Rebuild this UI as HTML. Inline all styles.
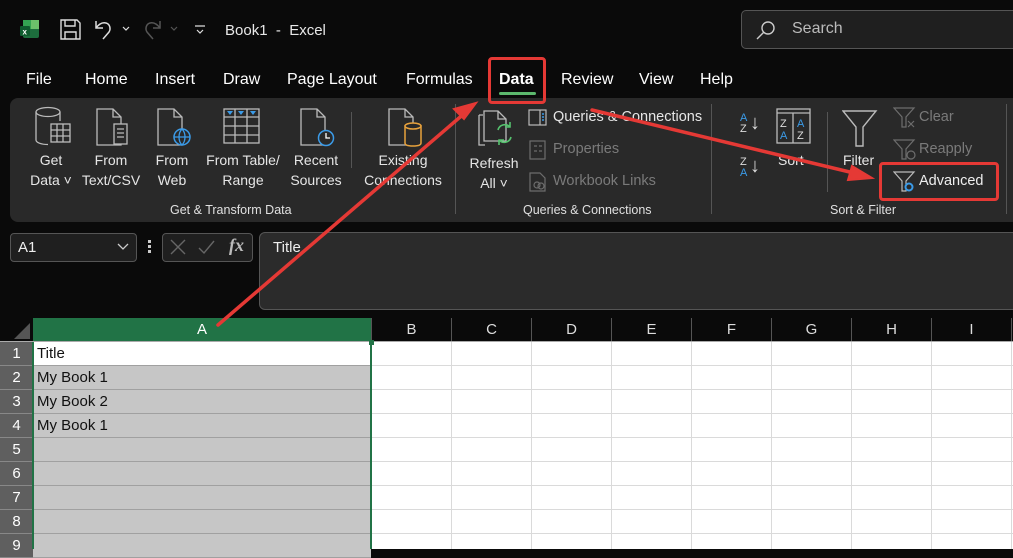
<!DOCTYPE html>
<html><head><meta charset="utf-8">
<style>
*{margin:0;padding:0;box-sizing:border-box}
body{width:1013px;height:549px;overflow:hidden;background:#0a0a0a;font-family:"Liberation Sans",sans-serif;color:#fff;position:relative}
.a{position:absolute}
.t{position:absolute;white-space:nowrap}
.menu{font-size:16px;top:71px;color:#fff}
.rb{font-size:14px;color:#e6e6e6;text-align:center;line-height:20px}
.dim{color:#7a7a7a}
.grp{font-size:12.5px;color:#e0e0e0}
.ch{position:absolute;top:318px;height:24px;border-left:1px solid #555;color:#ddd;font-size:15px;text-align:center;line-height:24px}
.rh{position:absolute;left:0;width:33px;height:24px;background:#5f5f5f;color:#fff;font-size:15px;text-align:center;line-height:24px;border-bottom:1px solid #888}
.cell{position:absolute;left:33px;width:338px;height:24px;background:#c6c6c6;border-bottom:1px solid #a0a0a0;color:#111;font-size:15px;line-height:24px;padding-left:4px}
</style></head><body>
<!-- title bar -->
<svg class="a" style="left:20px;top:19px" width="20" height="20" viewBox="0 0 20 20"><rect x="3" y="1" width="16" height="18" rx="2" fill="#1d6e3d"/><rect x="11" y="1" width="8" height="9" fill="#6cc06b"/><rect x="3" y="1" width="8" height="9" fill="#33a452"/><rect x="0" y="7" width="10" height="10" rx="1" fill="#0f5c2e"/><text x="2.5" y="15.5" font-size="8" font-weight="bold" fill="#fff" font-family="Liberation Sans">x</text></svg>
<svg class="a" style="left:60px;top:19px" width="21" height="21" viewBox="0 0 21 21" fill="none" stroke="#ddd" stroke-width="1.4"><path d="M1 1h16l3 3v16H1z"/><path d="M5 1v6h10V1M5 20v-7h11v7"/></svg>
<svg class="a" style="left:94px;top:19px" width="40" height="22" viewBox="0 0 40 22" fill="none" stroke="#ddd" stroke-width="1.5"><path d="M2 2v7h7M2 9c3-4 6-6 10-5 4 1 5 6 3 9l-6 7"/><path d="M29 8l3 3 3-3" stroke-width="1.2"/></svg>
<svg class="a" style="left:142px;top:19px" width="40" height="22" viewBox="0 0 40 22" fill="none" stroke="#555" stroke-width="1.5"><path d="M18 2v7h-7M18 9c-3-4-6-6-10-5-4 1-5 6-3 9l6 7"/><path d="M29 8l3 3 3-3" stroke-width="1.2"/></svg>
<svg class="a" style="left:194px;top:24px" width="12" height="12" viewBox="0 0 12 12" fill="none" stroke="#ddd" stroke-width="1.2"><path d="M1 2h10M3 6l3 3 3-3"/></svg>
<div class="t" style="left:225px;top:22px;font-size:15px;color:#e8e8e8">Book1&nbsp; -&nbsp; Excel</div>
<div class="a" style="left:741px;top:10px;width:290px;height:39px;border:1px solid #555;border-radius:5px;background:#1f1f1f"></div>
<svg class="a" style="left:756px;top:20px" width="20" height="20" viewBox="0 0 20 20" fill="none" stroke="#ccc" stroke-width="1.4"><circle cx="12" cy="8" r="6"/><path d="M7.5 12.5L1 19"/></svg>
<div class="t" style="left:792px;top:20px;font-size:16px;color:#bbb">Search</div>
<!-- menu -->
<div class="t menu" style="left:26px">File</div>
<div class="t menu" style="left:85px">Home</div>
<div class="t menu" style="left:155px">Insert</div>
<div class="t menu" style="left:223px">Draw</div>
<div class="t menu" style="left:287px">Page Layout</div>
<div class="t menu" style="left:406px">Formulas</div>
<div class="t menu" style="left:499px;font-weight:bold">Data</div>
<div class="a" style="left:499px;top:92px;width:37px;height:3px;border-radius:2px;background:#5cb86d"></div>
<div class="t menu" style="left:561px">Review</div>
<div class="t menu" style="left:639px">View</div>
<div class="t menu" style="left:700px">Help</div>
<!-- ribbon -->
<div class="a" style="left:10px;top:98px;width:1010px;height:124px;background:#292929;border-radius:8px"></div>
<div class="a" style="left:351px;top:112px;width:1px;height:56px;background:#555"></div>
<div class="a" style="left:455px;top:104px;width:1px;height:110px;background:#555"></div>
<div class="a" style="left:711px;top:104px;width:1px;height:110px;background:#555"></div>
<div class="a" style="left:827px;top:112px;width:1px;height:80px;background:#555"></div>
<div class="a" style="left:1006px;top:104px;width:1px;height:110px;background:#555"></div>
<!-- icons -->
<svg class="a" style="left:34px;top:106px" width="40" height="42" viewBox="0 0 40 42" fill="none" stroke="#bbb" stroke-width="1.3"><ellipse cx="14" cy="6" rx="12" ry="4.5"/><path d="M2 6v28c0 2.5 5 4.5 12 4.5M26 6v9"/><rect x="17" y="18" width="19" height="18" fill="#292929"/><path d="M17 24h19M17 30h19M23 18v18M29 18v18"/></svg>
<svg class="a" style="left:96px;top:108px" width="36" height="40" viewBox="0 0 36 40" fill="none" stroke="#bbb" stroke-width="1.3"><path d="M1 1h16l8 8v28H1z M17 1v8h8"/><rect x="18" y="16" width="13" height="20" fill="#292929"/><path d="M21 21h7M21 25h7M21 29h7"/></svg>
<svg class="a" style="left:157px;top:108px" width="36" height="40" viewBox="0 0 36 40" fill="none" stroke="#bbb" stroke-width="1.3"><path d="M1 1h16l8 8v28H1z M17 1v8h8"/><circle cx="25" cy="29" r="8" fill="#292929" stroke="#3b9be8" stroke-width="1.5"/><path d="M17 29h16M25 21c-4 4-4 12 0 16M25 21c4 4 4 12 0 16" stroke="#3b9be8"/></svg>
<svg class="a" style="left:223px;top:108px" width="38" height="38" viewBox="0 0 38 38" fill="none" stroke="#bbb" stroke-width="1.3"><rect x="1" y="1" width="35" height="34"/><path d="M1 9h35M1 18h35M1 27h35M12 1v34M24 1v34"/><path d="M4 3h6l-3 4zM15 3h6l-3 4zM27 3h6l-3 4z" fill="#3b9be8" stroke="none"/></svg>
<svg class="a" style="left:300px;top:108px" width="38" height="40" viewBox="0 0 38 40" fill="none" stroke="#bbb" stroke-width="1.3"><path d="M1 1h16l8 8v28H1z M17 1v8h8"/><circle cx="26" cy="30" r="7.5" fill="#292929" stroke="#3b9be8" stroke-width="1.5"/><path d="M26 25v5h4" stroke="#fff"/></svg>
<svg class="a" style="left:388px;top:108px" width="36" height="40" viewBox="0 0 36 40" fill="none" stroke="#bbb" stroke-width="1.3"><path d="M1 1h16l8 8v28H1z M17 1v8h8"/><path d="M17 18v17c0 2 3 3 8 3s8-1 8-3V18z" fill="#292929" stroke="#e8a23c" stroke-width="1.5"/><ellipse cx="25" cy="18" rx="8" ry="3" fill="#292929" stroke="#e8a23c" stroke-width="1.5"/></svg>
<div class="t rb" style="left:28px;top:150px;width:46px">Get<br>Data ˅</div>
<div class="t rb" style="left:80px;top:150px;width:62px">From<br>Text/CSV</div>
<div class="t rb" style="left:148px;top:150px;width:48px">From<br>Web</div>
<div class="t rb" style="left:200px;top:150px;width:86px">From Table/<br>Range</div>
<div class="t rb" style="left:288px;top:150px;width:56px">Recent<br>Sources</div>
<div class="t rb" style="left:358px;top:150px;width:90px">Existing<br>Connections</div>
<div class="t grp" style="left:170px;top:203px">Get &amp; Transform Data</div>
<!-- queries -->
<svg class="a" style="left:478px;top:110px" width="40" height="44" viewBox="0 0 40 44" fill="none" stroke="#bbb" stroke-width="1.3"><path d="M1 5h4M1 5v30h6"/><path d="M6 1h14l8 8v22H6z M20 1v8h8"/><path d="M20 20a7 7 0 0 1 12-3M33 27a7 7 0 0 1-12 3" stroke="#55c26e" stroke-width="1.6"/><path d="M32 12v5h-5M21 35v-5h5" stroke="#55c26e" stroke-width="1.6"/></svg>
<div class="t rb" style="left:466px;top:153px;width:56px">Refresh<br>All ˅</div>
<svg class="a" style="left:528px;top:109px" width="20" height="18" viewBox="0 0 20 18" fill="none" stroke="#bbb" stroke-width="1.2"><rect x="1" y="1" width="17" height="15"/><path d="M12 1v15"/><path d="M14 5h2M14 8h2M14 11h2" stroke="#3b9be8" stroke-width="1.5"/></svg>
<div class="t" style="left:553px;top:109px;font-size:14.5px;color:#e6e6e6">Queries &amp; Connections</div>
<svg class="a" style="left:529px;top:140px" width="18" height="20" viewBox="0 0 18 20" fill="none" stroke="#6d6d6d" stroke-width="1.2"><rect x="1" y="1" width="15" height="18"/><path d="M5 6h3M10 6h3M5 11h3M10 11h3"/></svg>
<div class="t dim" style="left:553px;top:141px;font-size:14.5px">Properties</div>
<svg class="a" style="left:529px;top:172px" width="18" height="20" viewBox="0 0 18 20" fill="none" stroke="#6d6d6d" stroke-width="1.2"><path d="M1 1h10l5 5v13H1z"/><circle cx="8" cy="13" r="3"/><circle cx="12" cy="14" r="3"/></svg>
<div class="t dim" style="left:553px;top:173px;font-size:14.5px">Workbook Links</div>
<div class="t grp" style="left:523px;top:203px">Queries &amp; Connections</div>
<!-- sort -->
<div class="t" style="left:740px;top:113px;font-size:11px;line-height:11px;color:#3b9be8">A<br><span style="color:#ddd">Z</span></div>
<div class="t" style="left:750px;top:112px;font-size:20px;color:#ddd">↓</div>
<div class="t" style="left:740px;top:157px;font-size:11px;line-height:11px;color:#ddd">Z<br><span style="color:#3b9be8">A</span></div>
<div class="t" style="left:750px;top:155px;font-size:20px;color:#ddd">↓</div>
<svg class="a" style="left:776px;top:108px" width="36" height="38" viewBox="0 0 36 38" fill="none" stroke="#bbb" stroke-width="1.3"><rect x="1" y="1" width="33" height="34"/><path d="M1 5h33M17 5v30"/><text x="4" y="19" font-size="11" fill="#ddd" stroke="none" font-family="Liberation Sans">Z</text><text x="4" y="31" font-size="11" fill="#3b9be8" stroke="none" font-family="Liberation Sans">A</text><text x="21" y="19" font-size="11" fill="#3b9be8" stroke="none" font-family="Liberation Sans">A</text><text x="21" y="31" font-size="11" fill="#ddd" stroke="none" font-family="Liberation Sans">Z</text></svg>
<div class="t rb" style="left:778px;top:150px">Sort</div>
<svg class="a" style="left:842px;top:110px" width="36" height="38" viewBox="0 0 36 38" fill="none" stroke="#bbb" stroke-width="1.4"><path d="M1 1h33L21 17v19h-7V17z"/></svg>
<div class="t rb" style="left:843px;top:150px">Filter</div>
<svg class="a" style="left:893px;top:107px" width="24" height="22" viewBox="0 0 24 22" fill="none" stroke="#6d6d6d" stroke-width="1.2"><path d="M1 1h20l-8 9v10h-4V10z"/><path d="M15 14l6 6M21 14l-6 6"/></svg>
<div class="t dim" style="left:919px;top:109px;font-size:14.5px">Clear</div>
<svg class="a" style="left:893px;top:139px" width="24" height="22" viewBox="0 0 24 22" fill="none" stroke="#6d6d6d" stroke-width="1.2"><path d="M1 1h20l-8 9v10h-4V10z"/><circle cx="18" cy="16" r="4"/></svg>
<div class="t dim" style="left:919px;top:141px;font-size:14.5px">Reapply</div>
<svg class="a" style="left:893px;top:171px" width="24" height="22" viewBox="0 0 24 22" fill="none" stroke="#bbb" stroke-width="1.2"><path d="M1 1h20l-8 9v10h-4V10z"/><circle cx="16" cy="16" r="3.5" fill="#292929" stroke="#3b9be8" stroke-width="2"/></svg>
<div class="t" style="left:919px;top:173px;font-size:14.5px;color:#eee">Advanced</div>
<div class="t grp" style="left:830px;top:203px">Sort &amp; Filter</div>
<!-- formula bar -->
<div class="a" style="left:10px;top:233px;width:127px;height:29px;border:1px solid #555;border-radius:4px;background:#1f1f1f"></div>
<div class="t" style="left:18px;top:239px;font-size:15px;color:#eee">A1</div>
<svg class="a" style="left:117px;top:243px" width="12" height="8" viewBox="0 0 12 8" fill="none" stroke="#ccc" stroke-width="1.3"><path d="M1 1l5 5 5-5"/></svg>
<div class="a" style="left:148px;top:240px;width:3px;height:3px;background:#ccc;box-shadow:0 5px #ccc,0 10px #ccc"></div>
<div class="a" style="left:162px;top:233px;width:91px;height:29px;border:1px solid #555;border-radius:4px;background:#1f1f1f"></div>
<svg class="a" style="left:170px;top:239px" width="50" height="16" viewBox="0 0 50 16" fill="none" stroke="#666" stroke-width="1.4"><path d="M1 1l14 14M15 1L1 15M29 9l5 5 10-12"/></svg>
<div class="t" style="left:229px;top:235px;font-size:18px;font-style:italic;font-family:'Liberation Serif',serif;color:#bbb;font-weight:bold">fx</div>
<div class="a" style="left:259px;top:232px;width:760px;height:78px;border:1px solid #555;border-radius:6px;background:#2b2b2b"></div>
<div class="t" style="left:273px;top:239px;font-size:15px;color:#eee">Title</div>
<!-- grid -->
<div class="a" style="left:0;top:342px;width:1013px;height:207px;background:#fff;background-image:linear-gradient(#dadada 1px,transparent 1px),linear-gradient(90deg,#dadada 1px,transparent 1px);background-size:80px 24px;background-position:51px 23px"></div>
<svg class="a" style="left:13px;top:322px" width="18" height="18"><path d="M17 1V17H1z" fill="#555"/></svg>
<div class="ch" style="left:33px;width:338px;background:#217346;color:#fff;border:none">A</div>
<div class="ch" style="left:371px;width:80px">B</div>
<div class="ch" style="left:451px;width:80px">C</div>
<div class="ch" style="left:531px;width:80px">D</div>
<div class="ch" style="left:611px;width:80px">E</div>
<div class="ch" style="left:691px;width:80px">F</div>
<div class="ch" style="left:771px;width:80px">G</div>
<div class="ch" style="left:851px;width:80px">H</div>
<div class="ch" style="left:931px;width:80px">I</div>
<div class="ch" style="left:1011px;width:10px"></div>
<div class="a" style="left:0;top:341px;width:1013px;height:1px;background:#aaa"></div>
<div class="rh" style="top:342px">1</div><div class="rh" style="top:366px">2</div><div class="rh" style="top:390px">3</div><div class="rh" style="top:414px">4</div><div class="rh" style="top:438px">5</div><div class="rh" style="top:462px">6</div><div class="rh" style="top:486px">7</div><div class="rh" style="top:510px">8</div><div class="rh" style="top:534px">9</div>
<div class="cell" style="top:342px;background:#fff">Title</div>
<div class="cell" style="top:366px">My Book 1</div>
<div class="cell" style="top:390px">My Book 2</div>
<div class="cell" style="top:414px">My Book 1</div>
<div class="cell" style="top:438px"></div><div class="cell" style="top:462px"></div><div class="cell" style="top:486px"></div><div class="cell" style="top:510px"></div><div class="cell" style="top:534px"></div>
<div class="a" style="left:32px;top:342px;width:2px;height:207px;background:#217346"></div>
<div class="a" style="left:370px;top:342px;width:2px;height:207px;background:#217346"></div>
<div class="a" style="left:369px;top:340px;width:5px;height:5px;background:#217346"></div>
<!-- annotations -->
<div class="a" style="left:488px;top:57px;width:58px;height:47px;border:3px solid #e53935;border-radius:4px"></div>
<div class="a" style="left:879px;top:162px;width:120px;height:39px;border:3px solid #e53935;border-radius:4px"></div>
<svg class="a" style="left:0;top:0" width="1013" height="549"><g stroke="#e53935" stroke-width="3.5" fill="#e53935" stroke-linecap="round"><line x1="218" y1="325" x2="466" y2="112"/><path d="M476 103l-22 6 10 10z" stroke-width="2"/><line x1="592" y1="110" x2="858" y2="174"/><path d="M872 178l-20-12-4 14z" stroke-width="2"/></g></svg>
</body></html>
